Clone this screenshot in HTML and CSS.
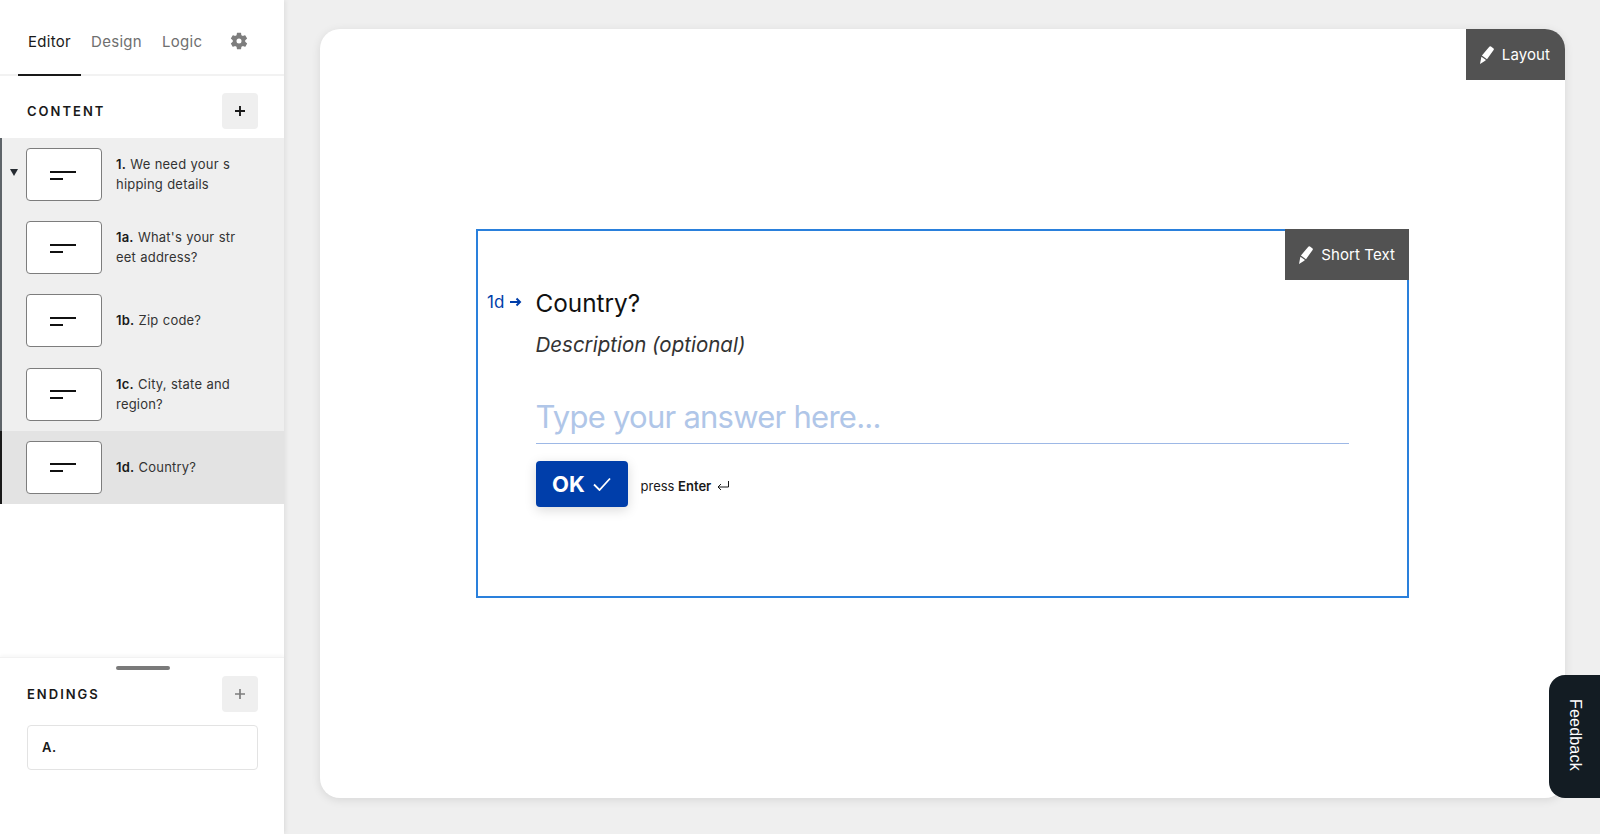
FILE: index.html
```html
<!DOCTYPE html>
<html>
<head>
    <title>Form editor</title>
    <link rel="stylesheet" href="styles.css">
</head>
<body>
    <div class="app">
        <aside class="sidebar">
            <nav class="tabs">
                <a class="tab active">Editor</a>
                <a class="tab">Design</a>
                <a class="tab">Logic</a>
                <svg class="gear" viewBox="0 0 24 24" width="20" height="20"><path fill="#7d7d7d" fill-rule="evenodd" d="M19.4 13c.04-.33.1-.66.1-1s-.06-.67-.1-1l2.1-1.65a.5.5 0 0 0 .12-.64l-2-3.46a.5.5 0 0 0-.61-.22l-2.49 1a7.3 7.3 0 0 0-1.69-.98l-.38-2.65A.49.49 0 0 0 14 2h-4a.49.49 0 0 0-.49.42l-.38 2.65c-.61.25-1.17.59-1.69.98l-2.49-1a.5.5 0 0 0-.61.22l-2 3.46a.49.49 0 0 0 .12.64L4.56 11c-.04.33-.06.66-.06 1s.02.67.06 1l-2.1 1.65a.5.5 0 0 0-.12.64l2 3.46c.12.22.39.3.61.22l2.49-1c.52.4 1.08.73 1.69.98l.38 2.65c.04.24.25.42.49.42h4c.24 0 .45-.18.49-.42l.38-2.65c.61-.25 1.17-.59 1.69-.98l2.49 1c.22.08.49 0 .61-.22l2-3.46a.5.5 0 0 0-.12-.64L19.4 13zM12 15a3 3 0 1 1 0-6 3 3 0 0 1 0 6z"/></svg>
            </nav>

            <div class="section-head content-head">
                <h2>CONTENT</h2>
                <button class="add-btn"><svg viewBox="0 0 12 12" width="12" height="12"><path d="M6 1v10M1 6h10" stroke="#191919" stroke-width="1.9" fill="none"/></svg></button>
            </div>

            <ul class="items">
                <li class="item">
                    <span class="caret"></span>
                    <div class="thumb"><svg viewBox="0 0 28 10" width="28" height="10"><path d="M1 2h26M1 9h13" stroke="#111" stroke-width="2" fill="none"/></svg></div>
                    <p><b>1.</b> We need your s<br>hipping details</p>
                </li>
                <li class="item">
                    <div class="thumb"><svg viewBox="0 0 28 10" width="28" height="10"><path d="M1 2h26M1 9h13" stroke="#111" stroke-width="2" fill="none"/></svg></div>
                    <p><b>1a.</b> What's your str<br>eet address?</p>
                </li>
                <li class="item">
                    <div class="thumb"><svg viewBox="0 0 28 10" width="28" height="10"><path d="M1 2h26M1 9h13" stroke="#111" stroke-width="2" fill="none"/></svg></div>
                    <p><b>1b.</b> Zip code?</p>
                </li>
                <li class="item">
                    <div class="thumb"><svg viewBox="0 0 28 10" width="28" height="10"><path d="M1 2h26M1 9h13" stroke="#111" stroke-width="2" fill="none"/></svg></div>
                    <p><b>1c.</b> City, state and<br>region?</p>
                </li>
                <li class="item selected">
                    <div class="thumb"><svg viewBox="0 0 28 10" width="28" height="10"><path d="M1 2h26M1 9h13" stroke="#111" stroke-width="2" fill="none"/></svg></div>
                    <p><b>1d.</b> Country?</p>
                </li>
            </ul>

            <div class="endings">
                <div class="handle"></div>
                <div class="section-head endings-head">
                    <h2>ENDINGS</h2>
                    <button class="add-btn"><svg viewBox="0 0 12 12" width="12" height="12"><path d="M6 1v10M1 6h10" stroke="#7d7d7d" stroke-width="1.7" fill="none"/></svg></button>
                </div>
                <div class="ending"><b>A.</b></div>
            </div>
        </aside>

        <main class="main">
            <div class="card">
                <div class="tag layout-tag">
                    <svg viewBox="0 0 14 18" width="14" height="18"><path fill="#fff" d="M9.3.8a1.2 1.2 0 0 1 1.7-.3l2.3 1.7a1.2 1.2 0 0 1 .3 1.7L7 13.2 1.9 9.6zM1.4 10.8l4.6 3.3-1.2.9L0 18z"/></svg>
                    Layout
                </div>
                <section class="block">
                    <div class="tag block-tag">
                        <svg viewBox="0 0 14 18" width="14" height="18"><path fill="#fff" d="M9.3.8a1.2 1.2 0 0 1 1.7-.3l2.3 1.7a1.2 1.2 0 0 1 .3 1.7L7 13.2 1.9 9.6zM1.4 10.8l4.6 3.3-1.2.9L0 18z"/></svg>
                        Short Text
                    </div>
                    <div class="question">
                        <div class="num">1d<svg viewBox="0 0 12 10" width="12" height="10"><path d="M0 5h10M6.5 1.5 10 5 6.5 8.5" stroke="#003eaa" stroke-width="2" fill="none"/></svg></div>
                        <div class="body">
                            <h1>Country?</h1>
                            <p class="desc">Description (optional)</p>
                            <div class="answer">Type your answer here...</div>
                            <div class="actions">
                                <button class="ok">OK <svg viewBox="0 0 18 14" width="18" height="14"><path d="M1 7.5 6.5 13 17 1.5" stroke="#fff" stroke-width="1.8" fill="none"/></svg></button>
                                <span class="hint">press <b>Enter</b> <svg viewBox="0 0 12 10" width="12" height="10"><path d="M11.5 0v6H1M4 3 1 6l3 3" stroke="#191919" stroke-width="1" fill="none"/></svg></span>
                            </div>
                        </div>
                    </div>
                </section>
            </div>
        </main>
    </div>
    <div class="feedback"><span>Feedback</span></div>
</body>
</html>
```

FILE: styles.css
```css
* {
    box-sizing: border-box;
}
html, body {
    height: 100%;
}
body {
    margin: 0;
    font-family: Inter, "Liberation Sans", sans-serif;
    color: #191919;
    background: #efefef;
    overflow: hidden;
}
.app {
    display: flex;
    height: 834px;
}

/* sidebar */
.sidebar {
    width: 284px;
    flex-shrink: 0;
    display: flex;
    flex-direction: column;
    background: white;
    box-shadow: 2px 0 4px rgba(0,0,0,0.06);
}
.tabs {
    height: 76px;
    display: flex;
    align-items: flex-start;
    padding-left: 18px;
    border-bottom: 2px solid #f2f2f2;
}
.tab {
    height: 76px;
    padding: 32px 10px 0;
    font-size: 15px;
    line-height: 19px;
    letter-spacing: 0.3px;
    color: #6f6f6f;
}
.tab.active {
    color: #191919;
    border-bottom: 2px solid #191919;
}
.gear {
    margin: 31px 0 0 17px;
}
.section-head {
    display: flex;
    align-items: center;
    justify-content: space-between;
    padding: 0 26px 0 27px;
}
.content-head {
    height: 62px;
    padding-top: 7px;
}
h2 {
    margin: 0;
    font-size: 13px;
    font-weight: 600;
    letter-spacing: 2px;
}
.add-btn {
    width: 36px;
    height: 36px;
    display: flex;
    align-items: center;
    justify-content: center;
    padding: 0;
    background: #efefef;
    border: none;
    border-radius: 4px;
}
.items {
    list-style: none;
    margin: 0;
    padding: 0;
}
.item {
    position: relative;
    height: 73.2px;
    display: flex;
    align-items: center;
    padding-left: 24px;
    background: #efefef;
    border-left: 2px solid #5e6469;
}
.item.selected {
    background: #e3e3e3;
    border-left-color: #191919;
}
.caret {
    position: absolute;
    left: 8px;
    top: 31px;
    border-left: 4.5px solid transparent;
    border-right: 4.5px solid transparent;
    border-top: 7px solid #262b31;
}
.thumb {
    width: 76px;
    height: 53px;
    flex-shrink: 0;
    display: flex;
    align-items: center;
    justify-content: center;
    padding-right: 2px;
    background: white;
    border: 1px solid #7d7d7d;
    border-radius: 4px;
}
.item p {
    margin: 0 0 1px 14px;
    font-size: 13px;
    line-height: 20px;
    letter-spacing: 0.2px;
    word-spacing: 0.4px;
    color: #333;
    white-space: nowrap;
}
.item b {
    font-weight: 600;
    color: #191919;
}
.endings {
    position: relative;
    margin-top: auto;
    height: 177px;
    border-top: 1px solid #f2f2f2;
    box-shadow: 0 -2px 3px rgba(0,0,0,0.03);
}
.handle {
    width: 54px;
    height: 4px;
    margin: 8px 0 0 116px;
    background: #7a7a7a;
    border-radius: 2px;
}
.endings-head {
    height: 36px;
    margin-top: 6px;
}
.ending {
    height: 45px;
    margin: 13px 26px 0 27px;
    padding: 0 14px 2px;
    display: flex;
    align-items: center;
    font-size: 13px;
    letter-spacing: 0.5px;
    border: 1px solid #e3e3e3;
    border-radius: 4px;
}
.ending b {
    font-weight: 600;
}

/* canvas */
.main {
    flex: 1;
    display: flex;
    padding: 29px 35px 36px 36px;
}
.card {
    position: relative;
    flex: 1;
    display: flex;
    align-items: center;
    justify-content: center;
    background: white;
    border-radius: 20px;
    box-shadow: 0 2px 10px rgba(0,0,0,0.1);
}
.tag {
    position: absolute;
    top: 0;
    right: 0;
    height: 51px;
    display: flex;
    align-items: center;
    gap: 8px;
    padding: 0 14px;
    font-size: 15px;
    letter-spacing: 0.1px;
    color: white;
    background: #525252;
}
.layout-tag {
    padding-right: 15px;
    border-top-right-radius: 20px;
}
.block-tag {
    top: -2px;
    right: -2px;
}
.block {
    position: relative;
    width: 933px;
    height: 369px;
    padding-top: 56px;
    border: 2px solid #2a80dc;
}
.question {
    display: flex;
}
.num {
    width: 57.5px;
    padding: 3px 0 0 9px;
    display: flex;
    align-items: center;
    align-self: flex-start;
    gap: 6px;
    font-size: 17px;
    line-height: 24px;
    color: #003eaa;
}
.body {
    width: 813px;
}
h1 {
    margin: 0;
    font-size: 24.3px;
    line-height: 32px;
    font-weight: 400;
    color: #111;
}
.desc {
    margin: 10px 0 0;
    font-size: 20.5px;
    line-height: 32px;
    font-style: italic;
    color: #333;
}
.answer {
    margin-top: 34px;
    padding-bottom: 4px;
    font-size: 31px;
    line-height: 44px;
    letter-spacing: -0.75px;
    color: #b0c6e8;
    border-bottom: 1px solid #9db8e6;
}
.actions {
    display: flex;
    align-items: center;
    margin-top: 17px;
}
.ok {
    width: 92px;
    height: 46px;
    display: flex;
    align-items: center;
    justify-content: center;
    gap: 8px;
    padding: 0;
    font-family: inherit;
    font-size: 22px;
    font-weight: 700;
    color: white;
    background: #003eaa;
    border: none;
    border-radius: 4px;
    box-shadow: 0 3px 12px rgba(0,0,0,0.15);
}
.hint {
    margin: 3px 0 0 13px;
    font-size: 13px;
    color: #191919;
}
.hint b {
    font-weight: 600;
}
.hint svg {
    margin-left: 2px;
}

/* feedback tab */
.feedback {
    position: absolute;
    top: 675px;
    right: 0;
    width: 51px;
    height: 123px;
    display: flex;
    align-items: center;
    justify-content: center;
    padding-bottom: 3px;
    background: #131c23;
    border-radius: 16px 0 0 16px;
}
.feedback span {
    writing-mode: vertical-rl;
    font-family: "Liberation Sans", Arial, sans-serif;
    font-size: 16px;
    letter-spacing: 0.2px;
    color: white;
}
```
